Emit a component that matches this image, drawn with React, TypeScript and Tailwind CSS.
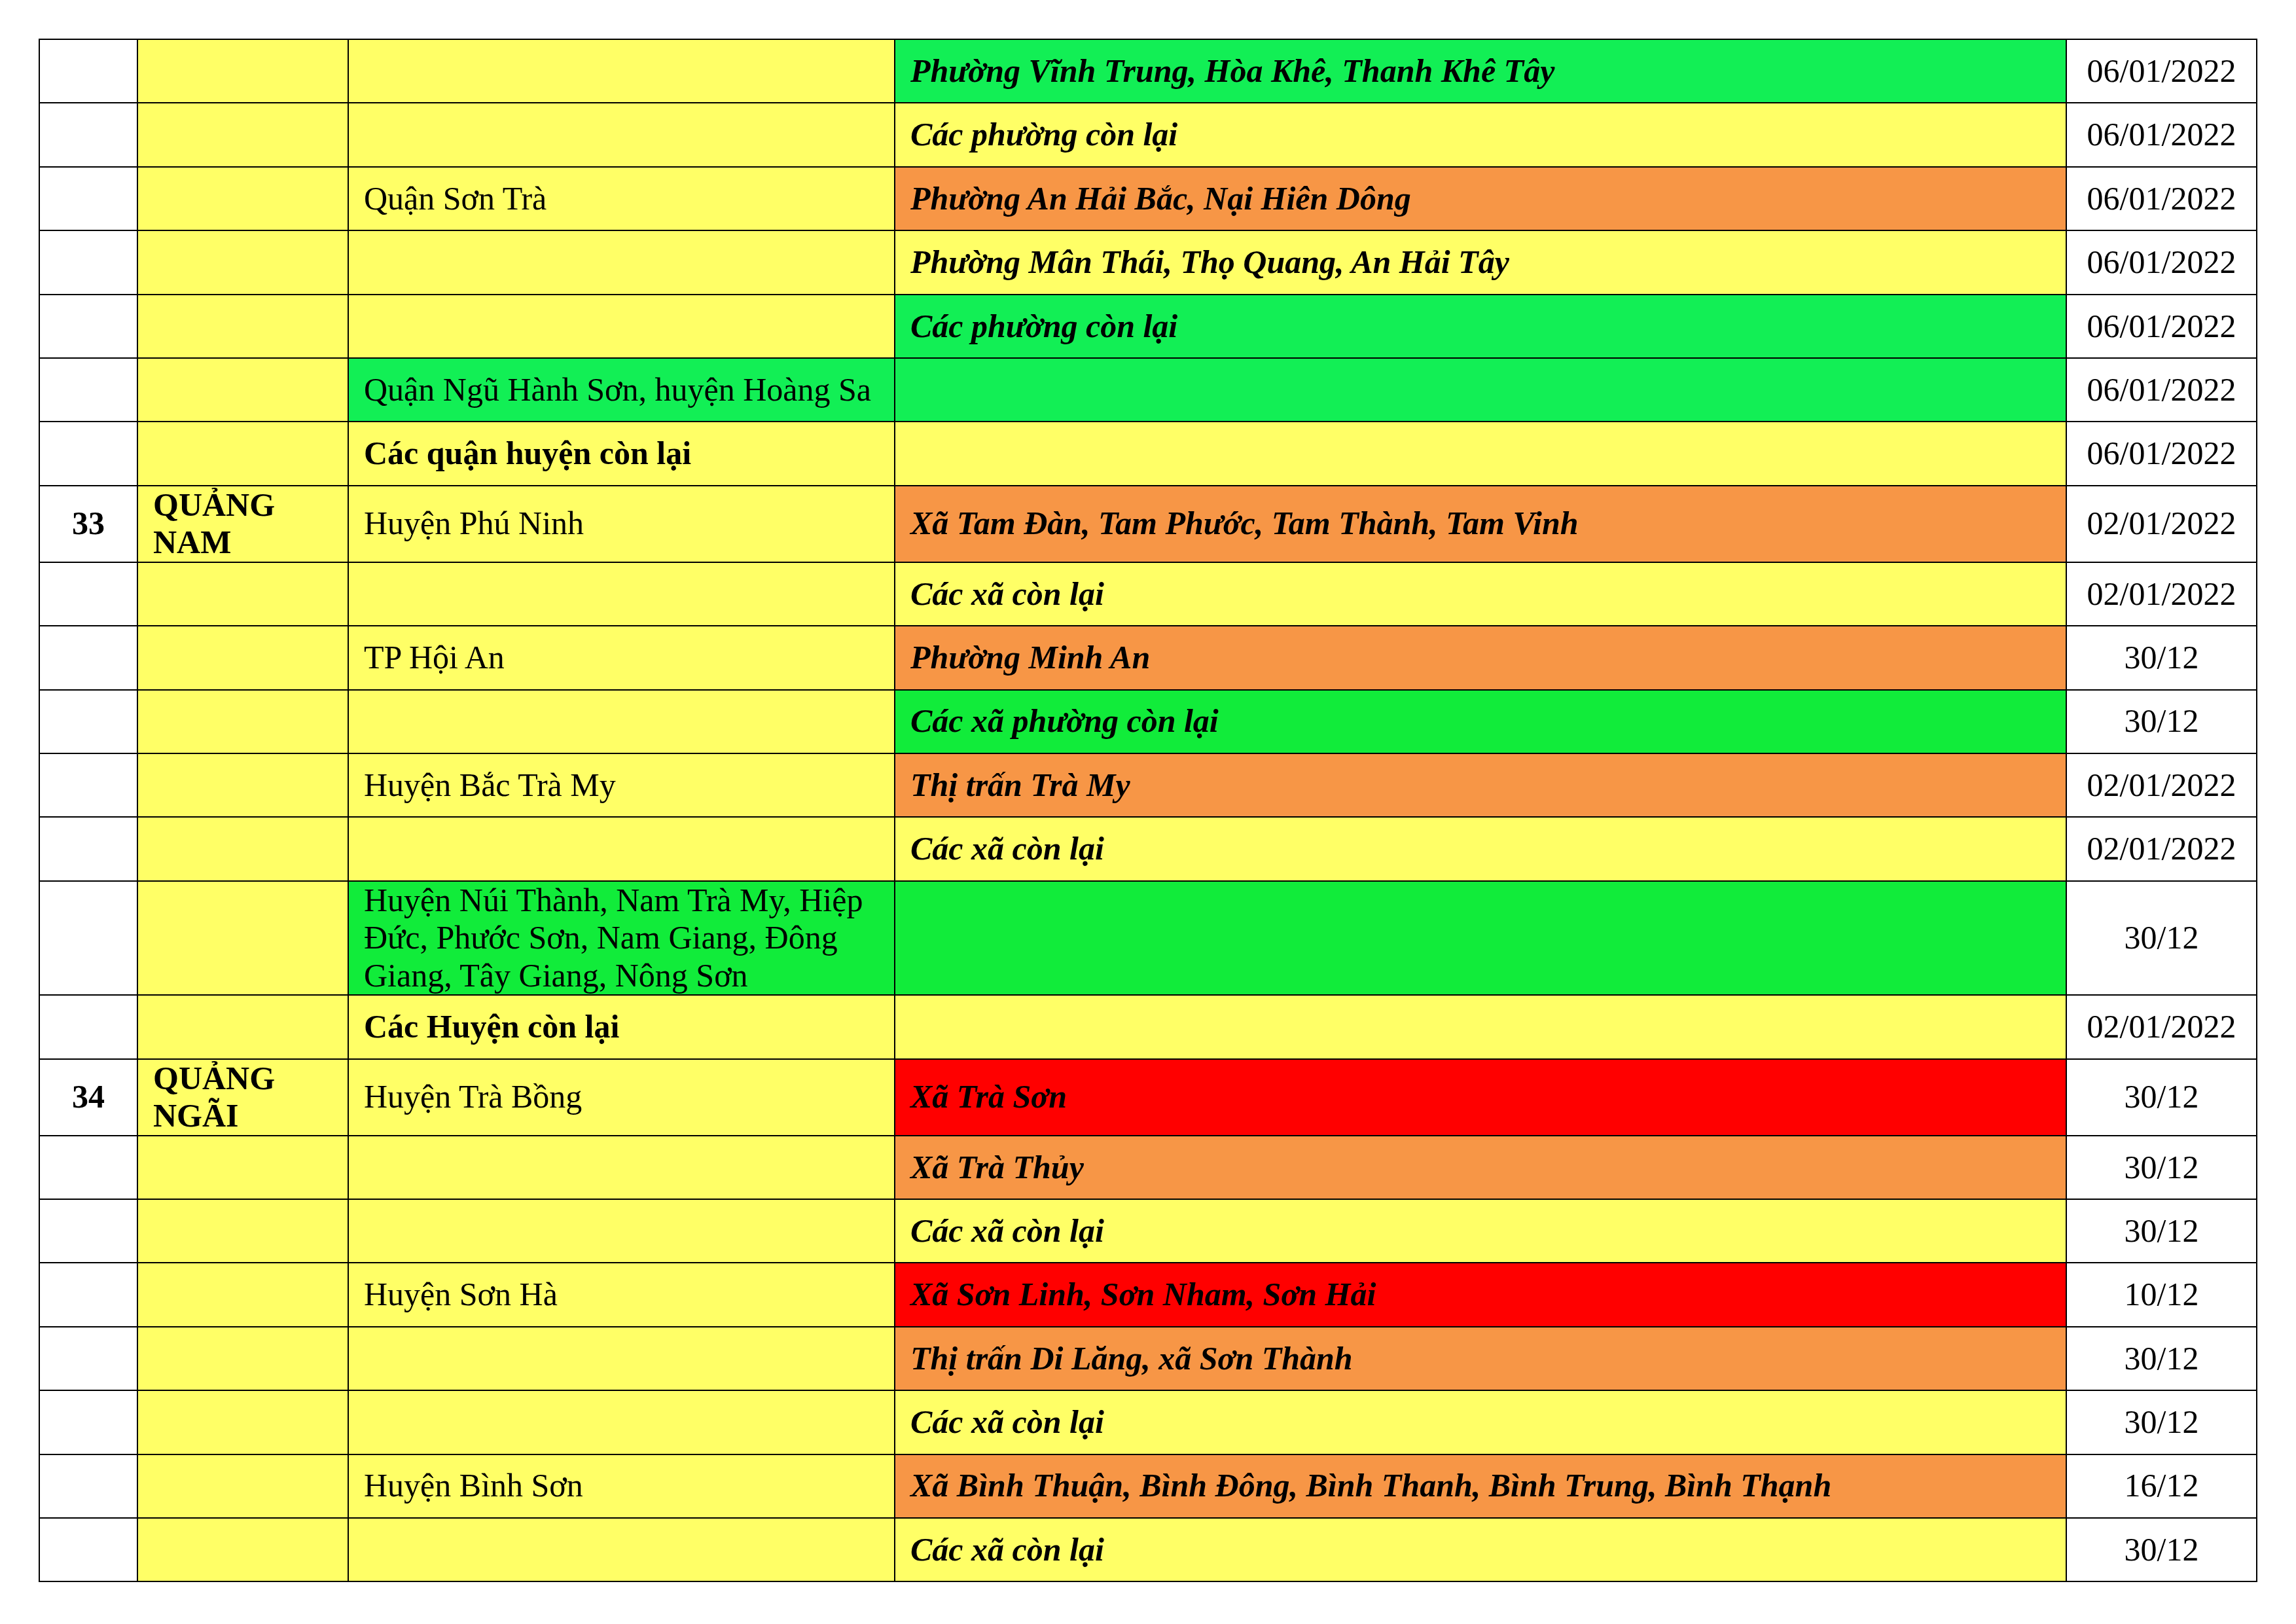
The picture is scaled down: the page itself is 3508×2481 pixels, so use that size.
import React from 'react';

type Fill = 'y' | 'g' | 'g2' | 'o' | 'r';

interface Row {
  no?: string;
  province?: string[];
  district?: React.ReactNode;
  districtBold?: boolean;
  districtFill?: Fill;
  ward?: string;
  wardFill: Fill;
  date: string;
}

const fillClass: Record<Fill, string> = {
  y: 'bg-[#ffff66]',
  g: 'bg-[#12ef55]',
  g2: 'bg-[#11ec3a]',
  o: 'bg-[#f79646]',
  r: 'bg-[#ff0000]',
};

const rows: Row[] = [
  { ward: 'Phường Vĩnh Trung, Hòa Khê, Thanh Khê Tây', wardFill: 'g', date: '06/01/2022' },
  { ward: 'Các phường còn lại', wardFill: 'y', date: '06/01/2022' },
  { district: 'Quận Sơn Trà', ward: 'Phường An Hải Bắc, Nại Hiên Dông', wardFill: 'o', date: '06/01/2022' },
  { ward: 'Phường Mân Thái, Thọ Quang, An Hải Tây', wardFill: 'y', date: '06/01/2022' },
  { ward: 'Các phường còn lại', wardFill: 'g', date: '06/01/2022' },
  { district: 'Quận Ngũ Hành Sơn, huyện Hoàng Sa', districtFill: 'g', wardFill: 'g', date: '06/01/2022' },
  { district: 'Các quận huyện còn lại', districtBold: true, wardFill: 'y', date: '06/01/2022' },
  {
    no: '33',
    province: ['QUẢNG', 'NAM'],
    district: 'Huyện Phú Ninh',
    ward: 'Xã Tam Đàn, Tam Phước, Tam Thành, Tam Vinh',
    wardFill: 'o',
    date: '02/01/2022',
  },
  { ward: 'Các xã còn lại', wardFill: 'y', date: '02/01/2022' },
  { district: 'TP Hội An', ward: 'Phường Minh An', wardFill: 'o', date: '30/12' },
  { ward: 'Các xã phường còn lại', wardFill: 'g2', date: '30/12' },
  { district: 'Huyện Bắc Trà My', ward: 'Thị trấn Trà My', wardFill: 'o', date: '02/01/2022' },
  { ward: 'Các xã còn lại', wardFill: 'y', date: '02/01/2022' },
  {
    district: (
      <>
        Huyện Núi Thành, Nam Trà My, Hiệp
        <br />
        Đức, Phước Sơn, Nam Giang, Đông
        <br />
        Giang, Tây Giang, Nông Sơn
      </>
    ),
    districtFill: 'g2',
    wardFill: 'g2',
    date: '30/12',
  },
  { district: 'Các Huyện còn lại', districtBold: true, wardFill: 'y', date: '02/01/2022' },
  {
    no: '34',
    province: ['QUẢNG', 'NGÃI'],
    district: 'Huyện Trà Bồng',
    ward: 'Xã Trà Sơn',
    wardFill: 'r',
    date: '30/12',
  },
  { ward: 'Xã Trà Thủy', wardFill: 'o', date: '30/12' },
  { ward: 'Các xã còn lại', wardFill: 'y', date: '30/12' },
  { district: 'Huyện Sơn Hà', ward: 'Xã Sơn Linh, Sơn Nham, Sơn Hải', wardFill: 'r', date: '10/12' },
  { ward: 'Thị trấn Di Lăng, xã Sơn Thành', wardFill: 'o', date: '30/12' },
  { ward: 'Các xã còn lại', wardFill: 'y', date: '30/12' },
  {
    district: 'Huyện Bình Sơn',
    ward: 'Xã Bình Thuận, Bình Đông, Bình Thanh, Bình Trung, Bình Thạnh',
    wardFill: 'o',
    date: '16/12',
  },
  { ward: 'Các xã còn lại', wardFill: 'y', date: '30/12' },
];

const cell = 'border-2 border-black h-[97.4px] py-0 px-[23px] align-middle';

export default function App() {
  return (
    <div
      className="w-[3508px] h-[2481px] bg-white pt-[59px] pl-[59px] text-black text-[50px] leading-[1.15]"
      style={{ fontFamily: '"Liberation Serif", "Times New Roman", serif' }}
    >
      <table className="border-collapse table-fixed w-[3390px]">
        <colgroup>
          <col className="w-[150px]" />
          <col className="w-[322px]" />
          <col className="w-[835px]" />
          <col className="w-[1790px]" />
          <col className="w-[291px]" />
        </colgroup>
        <tbody>
          {rows.map((row, i) => (
            <tr key={i}>
              <td className={`${cell} bg-white text-center font-bold`}>{row.no}</td>
              <td className={`${cell} bg-[#ffff66] font-bold`}>
                {row.province?.map((p) => (
                  <div key={p}>{p}</div>
                ))}
              </td>
              <td
                className={`${cell} ${fillClass[row.districtFill ?? 'y']} ${
                  row.districtBold ? 'font-bold' : ''
                }`}
              >
                {row.district}
              </td>
              <td className={`${cell} ${fillClass[row.wardFill]} font-bold italic`}>{row.ward}</td>
              <td className={`${cell} bg-white text-center`}>{row.date}</td>
            </tr>
          ))}
        </tbody>
      </table>
    </div>
  );
}
